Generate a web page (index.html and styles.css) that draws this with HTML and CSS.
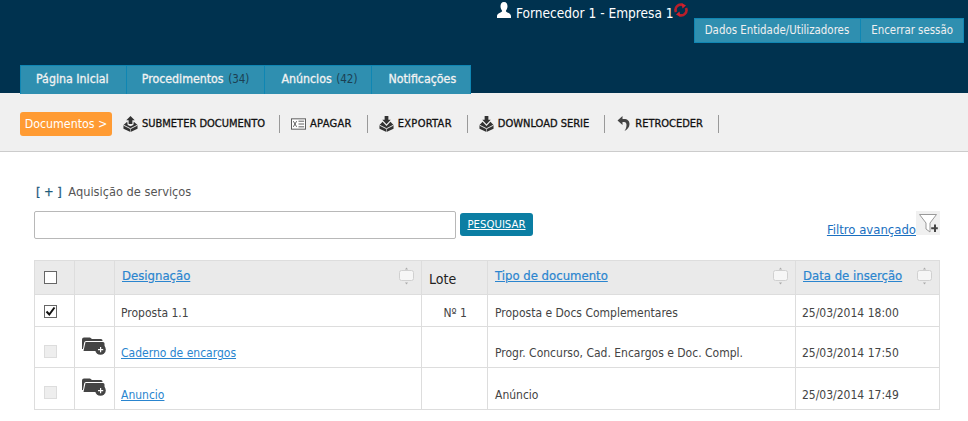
FILE: index.html
```html
<!DOCTYPE html>
<html lang="pt">
<head>
  <meta charset="UTF-8" />
  <title>Documentos</title>
  <link rel="stylesheet" href="styles.css">
</head>
<body>
  <svg class="defs" width="0" height="0">
    <symbol id="box-up" viewBox="0 0 16 17">
      <path d="M8 0 12.500 4.500H10V8.500H6V4.500H3.500Z" fill="#333"/>
      <path d="M4.500 6 0.500 9.500V13.500L8 17 15.500 13.500V9.500L11.500 6 11 9.500 8 11 5 9.500Z" fill="#333"/>
      <path d="M0.500 9.700 8 13.500 15.500 9.700" fill="none" stroke="#f0f0f0"/>
      <path d="M8 13.500V17" stroke="#f0f0f0" stroke-width="0.600"/>
    </symbol>
    <symbol id="box-down" viewBox="0 0 16 17">
      <path d="M6 0H10V4H12.500L8 8.800 3.500 4H6Z" fill="#333"/>
      <path d="M3.800 6 0.500 9.500V13.500L8 17 15.500 13.500V9.500L12.200 6 8 10.500Z" fill="#333"/>
      <path d="M0.500 9.700 8 13.500 15.500 9.700" fill="none" stroke="#f0f0f0"/>
      <path d="M8 13.500V17" stroke="#f0f0f0" stroke-width="0.600"/>
    </symbol>
    <symbol id="folder" viewBox="0 0 24 18">
      <path d="M0 2.500Q0 0.500 2 0.500H8L10 2H19Q20.500 2 20.500 3.500V4H4Q2.500 4 2.200 5.500L1 12H0Z" fill="#444"/>
      <path d="M3.500 5H21Q22.500 5 22.500 6.500V12H14V14H1.500Z" fill="#444"/>
      <circle cx="18.500" cy="12.500" r="5.300" fill="#444"/>
      <path d="M18 10H19.200V12H21.200V13.200H19.200V15.200H18V13.200H16V12H18Z" fill="#fff"/>
    </symbol>
    <symbol id="sort" viewBox="0 0 15 18">
      <rect x="0.500" y="3.500" width="14" height="10" rx="2" fill="#f6f6f6" stroke="#d0d0d0"/>
      <path d="M7.500 0.500 9 2.500H6ZM7.500 17.500 6 15.500H9Z" fill="#aaa"/>
    </symbol>
  </svg>

  <header class="topo">
    <div class="topo-user">
      <svg class="icon-user" width="14" height="17" viewBox="0 0 14 17"><path d="M7 0C9.500 0 10.500 2 10.500 4.300 10.500 6.500 9.500 8 8.800 9 9 10.500 14 11 14 14V16H0V14C0 11 5 10.500 5.200 9 4.500 8 3.500 6.500 3.500 4.300 3.500 2 4.500 0 7 0Z" fill="#fff"/></svg>
      <span>Fornecedor 1 - Empresa 1</span>
      <svg class="icon-refresh" width="14" height="14" viewBox="0 0 14 14"><path d="M2 9A5.200 5.200 0 0 1 9 2.200M12 5A5.200 5.200 0 0 1 5 11.800" fill="none" stroke="#b81f2a" stroke-width="2.600"/><path d="M7.500 0 12 2.500 8.500 5.500ZM6.500 14 2 11.500 5.500 8.500Z" fill="#d3202c"/></svg>
    </div>
    <div class="topo-botoes">
      <a class="btn-topo">Dados Entidade/Utilizadores</a>
      <a class="btn-topo">Encerrar sessão</a>
    </div>
    <nav class="tabs">
      <a class="tab">Página Inicial</a>
      <a class="tab">Procedimentos <small>(34)</small></a>
      <a class="tab">Anúncios <small>(42)</small></a>
      <a class="tab">Notificações</a>
    </nav>
  </header>

  <div class="toolbar">
    <span class="crumb">Documentos &gt;</span>
    <a class="tool tool-longo"><svg width="15" height="16"><use href="#box-up"/></svg>SUBMETER DOCUMENTO</a>
    <a class="tool tool-curto"><svg width="15" height="12" viewBox="0 0 16 12"><rect x="0.500" y="0.500" width="15" height="11" fill="#fff" stroke="#555"/><path d="M2.500 3 6 9M6 3 2.500 9" stroke="#555" fill="none"/><path d="M8 3H14M8 6H14M8 9H14" stroke="#555"/></svg>APAGAR</a>
    <a class="tool tool-curto"><svg width="15" height="16"><use href="#box-down"/></svg>EXPORTAR</a>
    <a class="tool"><svg width="15" height="16"><use href="#box-down"/></svg>DOWNLOAD SERIE</a>
    <a class="tool"><svg width="15" height="15" viewBox="0 0 12 15"><path d="M5 0 0 4.500 5 9V6H6.500C8.500 6 9 7.500 9 9 9 11.500 8 13.500 7 15 10 13.500 12 11 12 8 12 5 10 3 6.500 3H5Z" fill="#444"/></svg>RETROCEDER</a>
  </div>

  <main class="conteudo">
    <div class="filtro-titulo"><b>[ + ]</b> Aquisição de serviços</div>
    <div class="pesquisa">
      <input class="pesquisa-input" type="text" />
      <a class="btn-pesquisar">PESQUISAR</a>
      <div class="filtro-avancado">
        <a class="link">Filtro avançado</a>
        <span class="filtro-icon"><svg width="24" height="24" viewBox="0 0 24 24"><path d="M3.500 3.500H20.500L14 12V21L10 18V12Z" fill="#fff" stroke="#999"/><path d="M15.200 16.200H18V13.500H20V16.200H21.800V18.200H20V21H18V18.200H15.200Z" fill="#444"/></svg></span>
      </div>
    </div>

    <table class="tabela">
      <colgroup>
        <col class="c-check"><col class="c-icon"><col class="c-nome"><col class="c-lote"><col class="c-tipo"><col class="c-data">
      </colgroup>
      <thead>
        <tr>
          <th class="cel-check"><span class="check"></span></th>
          <th></th>
          <th><div class="th-flex"><a class="link">Designação</a><svg class="sort" width="15" height="18"><use href="#sort"/></svg></div></th>
          <th class="th-lote">Lote</th>
          <th><div class="th-flex"><a class="link">Tipo de documento</a><svg class="sort" width="15" height="18"><use href="#sort"/></svg></div></th>
          <th><div class="th-flex"><a class="link">Data de inserção</a><svg class="sort" width="15" height="18"><use href="#sort"/></svg></div></th>
        </tr>
      </thead>
      <tbody>
        <tr class="linha-1">
          <td class="cel-check"><span class="check marcado"><svg width="11" height="11" viewBox="0 0 11 11"><path d="M1.500 5.500 4.300 8.500 9.500 1.500" fill="none" stroke="#111" stroke-width="2"/></svg></span></td>
          <td></td>
          <td>Proposta 1.1</td>
          <td class="lote">Nº 1</td>
          <td>Proposta e Docs Complementares</td>
          <td>25/03/2014 18:00</td>
        </tr>
        <tr class="linha-2">
          <td class="cel-check"><span class="check inativo"></span></td>
          <td class="cel-folder"><svg width="24" height="18"><use href="#folder"/></svg></td>
          <td><a class="link">Caderno de encargos</a></td>
          <td></td>
          <td>Progr. Concurso, Cad. Encargos e Doc. Compl.</td>
          <td>25/03/2014 17:50</td>
        </tr>
        <tr class="linha-3">
          <td class="cel-check"><span class="check inativo"></span></td>
          <td class="cel-folder"><svg width="24" height="18"><use href="#folder"/></svg></td>
          <td><a class="link">Anuncio</a></td>
          <td></td>
          <td>Anúncio</td>
          <td>25/03/2014 17:49</td>
        </tr>
      </tbody>
    </table>
  </main>
</body>
</html>
```

FILE: styles.css
```css
body {
  margin: 0;
  background: #fff;
  color: #444;
  font-family: "DejaVu Sans", sans-serif;
  font-stretch: condensed;
  font-size: 12px;
}
a {
  cursor: pointer;
}
.defs {
  position: absolute;
}

/* topo */
.topo {
  background: #00324f;
  height: 93px;
  display: flex;
  flex-direction: column;
  box-sizing: border-box;
}
.topo-user {
  height: 18px;
  margin-left: 497px;
  display: flex;
  align-items: flex-start;
  color: #fff;
  font-size: 13.600px;
}
.topo-user span {
  margin: 5px 0 0 5px;
  white-space: nowrap;
}
.icon-user {
  margin-top: 2px;
}
.icon-refresh {
  margin-top: 3px;
}
.topo-botoes {
  display: flex;
  justify-content: flex-end;
  margin-right: 4px;
}
.btn-topo {
  background: #2f8fb0;
  border: 1px solid #0f86b3;
  color: #f0f0f0;
  height: 23px;
  line-height: 23px;
  padding: 0 11px 0 10px;
  font-size: 11.400px;
}
.btn-topo + .btn-topo {
  border-left: 0;
  padding: 0 10px;
}
.tabs {
  display: flex;
  margin: 22px 0 0 20px;
}
.tab {
  background: #2f8fb0;
  border: 1px solid #0f86b3;
  border-bottom: 0;
  border-left-width: 0;
  color: #f2f2f2;
  height: 28px;
  line-height: 27px;
  padding: 0 14px 0 16px;
  font-size: 12.300px;
  -webkit-text-stroke: 0.300px #f2f2f2;
}
.tab:first-child {
  border-left-width: 1px;
  padding: 0 17px 0 15px;
}
.tab:nth-child(2) {
  padding: 0 15px;
}
.tab small {
  color: #1c3f52;
  font-size: 11.500px;
  margin-left: 1px;
  -webkit-text-stroke: 0;
}

/* barra de acoes */
.toolbar {
  background: #f0f0f0;
  border-bottom: 1px solid #ccc;
  height: 58px;
  display: flex;
  align-items: center;
  padding-left: 20px;
}
.crumb {
  background: #ff9b33;
  color: #fff;
  border-radius: 3px;
  height: 24px;
  line-height: 24px;
  width: 92px;
  text-align: center;
  font-size: 12.300px;
  margin-top: 3px;
}
.tool {
  display: flex;
  align-items: center;
  gap: 4px;
  height: 18px;
  padding: 0 15px 0 11px;
  border-right: 1px solid #999;
  color: #111;
  font-size: 11px;
  -webkit-text-stroke: 0.300px #111;
  margin-top: 3px;
}
.tool-longo {
  padding-right: 14px;
}
.tool-curto {
  letter-spacing: 0.300px;
}

/* conteudo */
.conteudo {
  padding: 32px 28px 0 34px;
}
.filtro-titulo {
  margin-left: 2px;
  font-size: 12.700px;
  height: 27px;
  color: #555;
}
.filtro-titulo b {
  color: #1f5c7c;
  font-weight: normal;
  -webkit-text-stroke: 0.300px #1f5c7c;
  margin-right: 3px;
}
.pesquisa {
  display: flex;
  align-items: flex-start;
  height: 49px;
}
.pesquisa-input {
  width: 422px;
  height: 28px;
  box-sizing: border-box;
  padding: 0;
  border: 1px solid #b8b8b8;
  border-radius: 2px;
  background: #fff;
}
.btn-pesquisar {
  background: #0b7ea3;
  color: #fff;
  text-decoration: underline;
  margin: 2px 0 0 4px;
  height: 23px;
  line-height: 23px;
  width: 73px;
  text-align: center;
  border-radius: 3px;
  font-size: 11.300px;
}
.filtro-avancado {
  margin-left: auto;
  display: flex;
  align-items: flex-start;
}
.filtro-avancado .link {
  margin-top: 11px;
  color: #1a6fc0;
}
.filtro-icon {
  background: #f0f0f0;
  width: 24px;
  height: 24px;
  display: block;
}
.filtro-icon svg {
  display: block;
}
.link {
  color: #2a85cf;
  text-decoration: underline;
  font-size: 13px;
}

/* tabela */
.tabela {
  border-collapse: collapse;
  table-layout: fixed;
  width: 905px;
}
.c-check, .c-icon { width: 40px; }
.c-nome { width: 307px; }
.c-lote { width: 66px; }
.c-tipo { width: 308px; }
.c-data { width: 144px; }
.tabela th, .tabela td {
  border: 1px solid #ddd;
  padding: 0 6px;
  text-align: left;
  font-weight: normal;
  font-size: 12px;
  white-space: nowrap;
}
.tabela td .link {
  font-size: 12px;
}
.tabela td:nth-child(5) {
  padding-left: 7px;
}
.tabela th {
  background: #eaeaea;
  height: 34px;
  vertical-align: top;
  padding: 7px 6px 0 7px;
  box-sizing: border-box;
}
.th-flex .link {
  -webkit-text-stroke: 0.200px #2a85cf;
}
.tabela .th-lote {
  color: #222;
  font-size: 14px;
  padding-top: 10px;
}
.th-flex {
  display: flex;
  justify-content: space-between;
  align-items: flex-start;
}
.sort {
  margin: -1px 1px 0 0;
}
.tabela .cel-check {
  padding-left: 9px;
  vertical-align: top;
}
.check {
  display: inline-block;
  vertical-align: top;
  width: 11px;
  height: 11px;
  border: 1px solid #666;
  background: #fff;
  margin-top: 3px;
}
.check svg {
  display: block;
}
.check.marcado {
  margin-top: 10px;
}
.check.inativo {
  border-color: #ddd;
  background: #eee;
  margin-top: 11px;
}
.linha-1 td {
  height: 32px;
  padding-top: 5px;
  box-sizing: border-box;
}
.linha-1 .cel-check {
  padding-top: 0;
}
.linha-2 td { height: 41px; }
.linha-3 td { height: 42px; }
.linha-2 td, .linha-3 td {
  vertical-align: top;
  padding-top: 19px;
  box-sizing: border-box;
}
.linha-3 td {
  padding-top: 20px;
}
.tabela .linha-2 .cel-check, .tabela .linha-3 .cel-check {
  padding-top: 7px;
}
.tabela .cel-folder {
  padding: 10px 0 0 7px;
}
.cel-folder svg {
  display: block;
}
.tabela .lote {
  text-align: right;
  padding-right: 20px;
}
```
